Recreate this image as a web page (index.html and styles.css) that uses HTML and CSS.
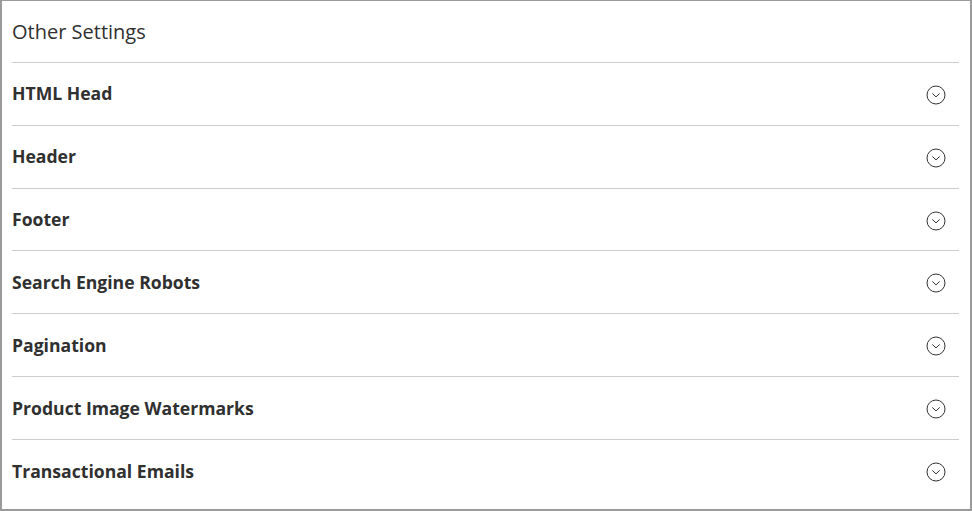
FILE: index.html
```html
<!DOCTYPE html>
<html>
<head>
<meta charset="utf-8">
<link rel="stylesheet" href="styles.css">
</head>
<body>
<div class="panel">
  <div class="legend">Other Settings</div>
  <div class="sections">
    <div class="row"><span class="title">HTML Head</span><svg class="chev" viewBox="0 0 20 20"><circle cx="10" cy="10" r="9" /><path d="M6.3 8.4 L10 11.9 L13.7 8.4" /></svg></div>
    <div class="row"><span class="title">Header</span><svg class="chev" viewBox="0 0 20 20"><circle cx="10" cy="10" r="9" /><path d="M6.3 8.4 L10 11.9 L13.7 8.4" /></svg></div>
    <div class="row"><span class="title">Footer</span><svg class="chev" viewBox="0 0 20 20"><circle cx="10" cy="10" r="9" /><path d="M6.3 8.4 L10 11.9 L13.7 8.4" /></svg></div>
    <div class="row"><span class="title">Search Engine Robots</span><svg class="chev" viewBox="0 0 20 20"><circle cx="10" cy="10" r="9" /><path d="M6.3 8.4 L10 11.9 L13.7 8.4" /></svg></div>
    <div class="row"><span class="title">Pagination</span><svg class="chev" viewBox="0 0 20 20"><circle cx="10" cy="10" r="9" /><path d="M6.3 8.4 L10 11.9 L13.7 8.4" /></svg></div>
    <div class="row"><span class="title">Product Image Watermarks</span><svg class="chev" viewBox="0 0 20 20"><circle cx="10" cy="10" r="9" /><path d="M6.3 8.4 L10 11.9 L13.7 8.4" /></svg></div>
    <div class="row last"><span class="title">Transactional Emails</span><svg class="chev" viewBox="0 0 20 20"><circle cx="10" cy="10" r="9" /><path d="M6.3 8.4 L10 11.9 L13.7 8.4" /></svg></div>
  </div>
</div>
</body>
</html>
```

FILE: styles.css
```css
html, body {
  margin: 0;
  padding: 0;
  background: #fff;
}
.panel {
  box-sizing: border-box;
  width: 972px;
  height: 511px;
  border: 1px solid #9a9a9a;
  border-left-width: 2px;
  border-right-width: 2px;
  border-bottom-width: 2px;
  padding: 0 11px 0 10px;
  font-family: "Open Sans", "Liberation Sans", sans-serif;
  color: #303030;
}
.legend {
  display: flex;
  align-items: center;
  font-size: 20px;
  font-weight: 400;
  border-bottom: 1px solid #cccccc;
  padding-bottom: 1px;
  box-sizing: border-box;
  height: 62px;
}
.row {
  display: flex;
  align-items: center;
  justify-content: space-between;
  height: 62.83px;
  box-sizing: border-box;
  border-bottom: 1px solid #cccccc;
  padding-right: 13px;
}
.row.last {
  border-bottom: none;
}
.title {
  font-size: 17.6px;
  font-weight: 700;
  color: #303030;
  margin-bottom: 1px;
}
.chev {
  width: 20px;
  height: 20px;
  margin-top: 2px;
  fill: none;
  stroke: #333;
  stroke-width: 1;
}
```
